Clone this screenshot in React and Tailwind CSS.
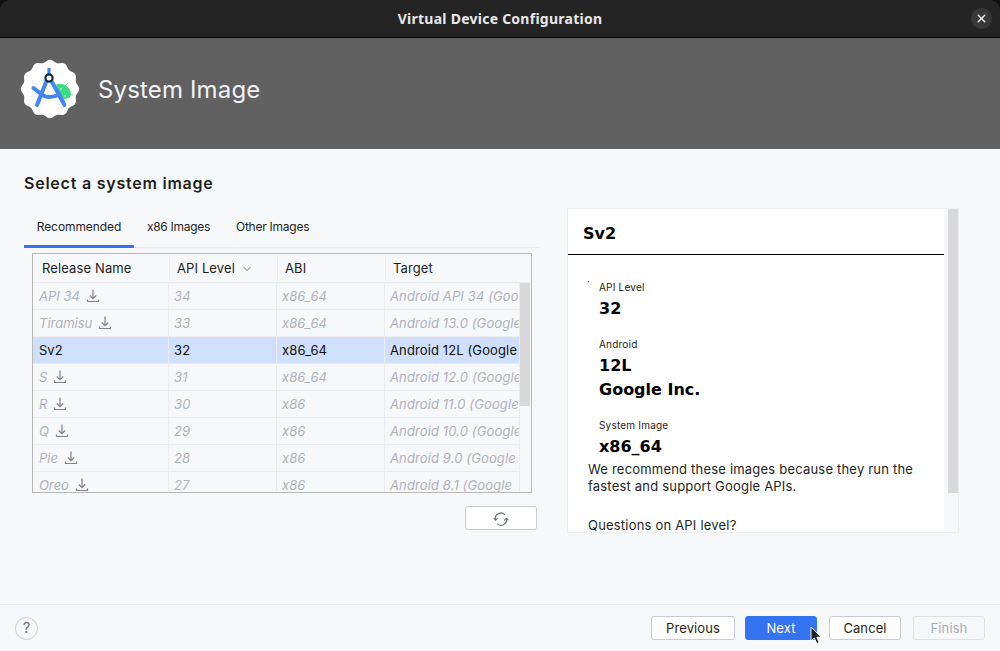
import React from 'react';
import { ChevronDown, X } from 'lucide-react';

const ROWS = [
  { name: 'API 34', api: '34', abi: 'x86_64', target: 'Android API 34 (Google APIs)' },
  { name: 'Tiramisu', api: '33', abi: 'x86_64', target: 'Android 13.0 (Google APIs)' },
  { name: 'Sv2', api: '32', abi: 'x86_64', target: 'Android 12L (Google APIs)', selected: true },
  { name: 'S', api: '31', abi: 'x86_64', target: 'Android 12.0 (Google APIs)' },
  { name: 'R', api: '30', abi: 'x86', target: 'Android 11.0 (Google APIs)' },
  { name: 'Q', api: '29', abi: 'x86', target: 'Android 10.0 (Google APIs)' },
  { name: 'Pie', api: '28', abi: 'x86', target: 'Android 9.0 (Google' },
  { name: 'Oreo', api: '27', abi: 'x86', target: 'Android 8.1 (Google' },
];

function scallop() {
  let pts = [];
  for (let i = 0; i < 180; i++) {
    const a = (i / 180) * Math.PI * 2;
    const r = 28 + 1.2 * Math.cos(a * 12);
    pts.push(`${(30 + r * Math.sin(a)).toFixed(2)},${(30 - r * Math.cos(a)).toFixed(2)}`);
  }
  return pts.join(' ');
}

function StudioLogo() {
  return (
    <svg width="60" height="60" viewBox="0 0 60 60" className="shrink-0">
      <polygon points={scallop()} fill="#fff" />
      <path d="M36 25.500A11 10 0 0 1 50 38.500L42 41z" fill="#3ddc84" />
      <path d="M45 27l3-3M50 36l3 0" stroke="#3ddc84" strokeWidth="0.7" />
      <circle cx="41" cy="30" r="0.8" fill="#fff" />
      <circle cx="45" cy="37" r="0.8" fill="#fff" />
      <path d="M29 9v7" stroke="#4285f4" strokeWidth="3.2" />
      <path d="M26.500 22L17 46M31.500 22L44.500 46" stroke="#4285f4" strokeWidth="4" strokeLinecap="round" />
      <path d="M13.500 29l9.500 7.500c4 2 11 2 16.500-1" stroke="#4285f4" strokeWidth="4" fill="none" strokeLinecap="round" />
      <circle cx="29" cy="19" r="3.600" fill="#fff" stroke="#0f2a38" strokeWidth="2.200" />
    </svg>
  );
}

function DownloadIcon() {
  return (
    <svg width="14" height="14" viewBox="0 0 14 14" fill="none" stroke="#7f8390" strokeWidth="1.2" className="shrink-0">
      <path d="M7 0.5v9M3.8 6.5L7 9.7l3.2-3.2M1.5 10.5v2h11v-2" />
    </svg>
  );
}

function SyncIcon() {
  return (
    <svg width="16" height="16" viewBox="0 0 16 16" fill="none" stroke="#6c707e" strokeWidth="1.1">
      <path d="M2.5 9a5.5 5.5 0 0 1 9.5-5" />
      <path d="M13.5 8a5.5 5.5 0 0 1-9.5 4.5" />
      <path d="M0.8 7L2.6 9.2 4.6 7.2M11.4 9.4L13.4 7.4 15.4 9.4" />
    </svg>
  );
}

function Row({ row }) {
  const tone = row.selected ? 'bg-[#d0dffc] text-[#111]' : 'text-[#b0b3bc] italic';
  return (
    <div className={`flex h-[27px] shrink-0 items-center border-b border-[#ebecf0] text-[13px] tracking-[0.12px] ${tone}`}>
      <div className="flex h-full w-[135px] shrink-0 items-center gap-[6px] pl-[6px] tracking-normal">
        <span className="pt-[2px]">{row.name}</span>
        {!row.selected && <DownloadIcon />}
      </div>
      <div className="flex h-full w-[108px] shrink-0 items-center border-l border-[#ebecf0] pl-[5px] pt-[2px]">{row.api}</div>
      <div className="flex h-full w-[108px] shrink-0 items-center border-l border-[#ebecf0] pl-[5px] pt-[2px]">{row.abi}</div>
      <div className="flex h-full w-[135px] shrink-0 items-center overflow-hidden whitespace-nowrap border-l border-[#ebecf0] pl-[5px] pt-[2px]">{row.target}</div>
    </div>
  );
}

function Table() {
  return (
    <div className="ml-[8px] flex h-[240px] w-[500px] flex-col overflow-hidden border border-[#b9b9b9]">
      <div className="flex h-[29px] shrink-0 items-center border-b border-[#ebecf0] pt-[1px] text-[13px] tracking-[0.12px] text-[#1e1f22]">
        <div className="w-[136px] shrink-0 pl-[9px]">Release Name</div>
        <div className="flex w-[108px] shrink-0 items-center gap-[6px] border-l border-[#ebecf0] py-[3px] pl-[7px]">
          API Level
          <ChevronDown size={12} className="text-[#6c707e]" />
        </div>
        <div className="w-[108px] shrink-0 border-l border-[#ebecf0] py-[3px] pl-[7px]">ABI</div>
        <div className="flex-1 border-l border-[#ebecf0] py-[3px] pl-[7px]">Target</div>
      </div>
      <div className="flex min-h-0 flex-1">
        <div className="w-[487px] shrink-0 overflow-hidden border-r border-[#ebecf0]">
          {ROWS.map((row) => (
            <Row key={row.name} row={row} />
          ))}
        </div>
        <div className="flex-1">
          <div className="h-[123px] w-[10px] bg-[#d9d9d9]" />
        </div>
      </div>
    </div>
  );
}

function Info({ label, children, className = '' }) {
  return (
    <div className={`ml-[11px] ${className}`}>
      <div className="text-[10px] leading-[14px] tracking-[0.2px] text-[#222]">{label}</div>
      <div className="mt-[3px] font-['DejaVu_Sans',sans-serif] text-[16px] font-bold leading-[24px] tracking-normal text-black">{children}</div>
    </div>
  );
}

function DetailPanel() {
  return (
    <div className="relative flex h-[325px] w-[392px] overflow-hidden border border-[#ebecf0]">
      <div className="w-[376px] shrink-0 bg-white">
        <div className="flex h-[46px] items-center border-b border-black pl-[15px] pt-[4px] font-['DejaVu_Sans',sans-serif] text-[16px] font-bold text-black">
          Sv2
        </div>
        <div className="relative pl-[20px] pt-[25px] text-[13px] leading-[17px] tracking-[0.2px] text-[#1e1f22]">
          <span className="absolute left-[20px] top-[26px] h-px w-px bg-black" />
          <Info label="API Level">32</Info>
          <Info label="Android" className="mt-[16px]">12L<br />Google Inc.</Info>
          <Info label="System Image" className="mt-[16px]">x86_64</Info>
          <p className="mt-[2px] w-[340px]">We recommend these images because they run the fastest and support Google APIs.</p>
          <p className="mt-[22px]">Questions on API level?</p>
        </div>
      </div>
      <div className="ml-[4px] h-[284px] w-[10px] bg-[#d9d9d9]" />
    </div>
  );
}

function Btn({ children, primary, disabled, className = '' }) {
  let tone = 'border-[#c9ccd6] bg-white text-[#1e1f22]';
  if (primary) tone = 'border-[#3574f0] bg-[#3574f0] text-white';
  if (disabled) tone = 'border-[#dfe1e5] bg-[#f7f8fa] text-[#a8adbd]';
  return (
    <button className={`flex h-[24px] items-center justify-center rounded-[3px] border pt-[1px] text-[13px] tracking-[0.1px] ${tone} ${className}`}>
      {children}
    </button>
  );
}

export default function App() {
  return (
    <div className="relative flex h-[651px] w-[1000px] flex-col overflow-hidden bg-[#111] font-['Inter',sans-serif]">
      <header className="flex h-[38px] shrink-0 items-center justify-between rounded-t-[10px] border-b border-black bg-[#242424] pl-[29px] pr-[8px]">
        <div className="flex-1 text-center font-['Noto_Sans',sans-serif] text-[14px] font-bold tracking-[0.25px] text-[#e8e8e8]">Virtual Device Configuration</div>
        <div className="flex h-[21px] w-[21px] items-center justify-center rounded-full bg-[#383838]">
          <X size={13} strokeWidth={2.6} className="text-white" />
        </div>
      </header>

      <div className="flex h-[111px] shrink-0 items-center gap-[18px] bg-[#616161] pb-[9px] pl-[20px]">
        <StudioLogo />
        <div className="pt-[2px] text-[24px] tracking-[0.15px] text-[#f0f3f8]">System Image</div>
      </div>

      <main className="flex min-h-0 flex-1 flex-col bg-[#f7f8fa]">
        <h1 className="pl-[24px] pt-[24px] text-[16px] font-semibold leading-[20px] tracking-[0.77px] text-[#1e1f22]">Select a system image</h1>
        <div className="mt-[15px] flex pl-[24px]">
          <div className="w-[516px] shrink-0">
            <div className="flex h-[40px] border-b border-[#ebecf0] text-[12px] text-[#1e1f22]">
              <div className="flex h-[40px] w-[110px] items-center justify-center border-b-[3px] border-[#3574f0] pt-[1px] tracking-[-0.08px]">Recommended</div>
              <div className="ml-[13px] flex h-[38px] items-center tracking-[-0.3px]">x86 Images</div>
              <div className="ml-[26px] flex h-[38px] items-center tracking-[-0.25px]">Other Images</div>
            </div>
            <div className="mt-[5px]">
              <Table />
            </div>
            <div className="mr-[3px] mt-[13px] flex justify-end">
              <Btn className="w-[72px]">
                <SyncIcon />
              </Btn>
            </div>
          </div>
          <div className="ml-[27px]">
            <DetailPanel />
          </div>
        </div>
      </main>

      <footer className="flex h-[47px] shrink-0 items-center border-t border-[#ebecf0] bg-[#f7f8fa] pl-[15px] pr-[15px]">
        <div className="flex h-[23px] w-[23px] items-center justify-center rounded-full border border-[#c9ccd6] text-[15px] text-[#6c707e]">?</div>
        <div className="ml-auto flex gap-[10px]">
          <Btn className="w-[84px]">Previous</Btn>
          <Btn primary className="w-[72px]">Next</Btn>
          <Btn className="ml-[2px] w-[72px]">Cancel</Btn>
          <Btn disabled className="ml-[2px] w-[72px]">Finish</Btn>
        </div>
      </footer>

      {/* mouse pointer */}
      <svg width="13" height="19" viewBox="0 0 13 19" className="absolute left-[810px] top-[626px]">
        <path d="M1 1v14l3.4-3 2.4 5.6 2.4-1-2.4-5.4h4.6z" fill="#222" stroke="#fff" strokeWidth="0.9" />
      </svg>
    </div>
  );
}
